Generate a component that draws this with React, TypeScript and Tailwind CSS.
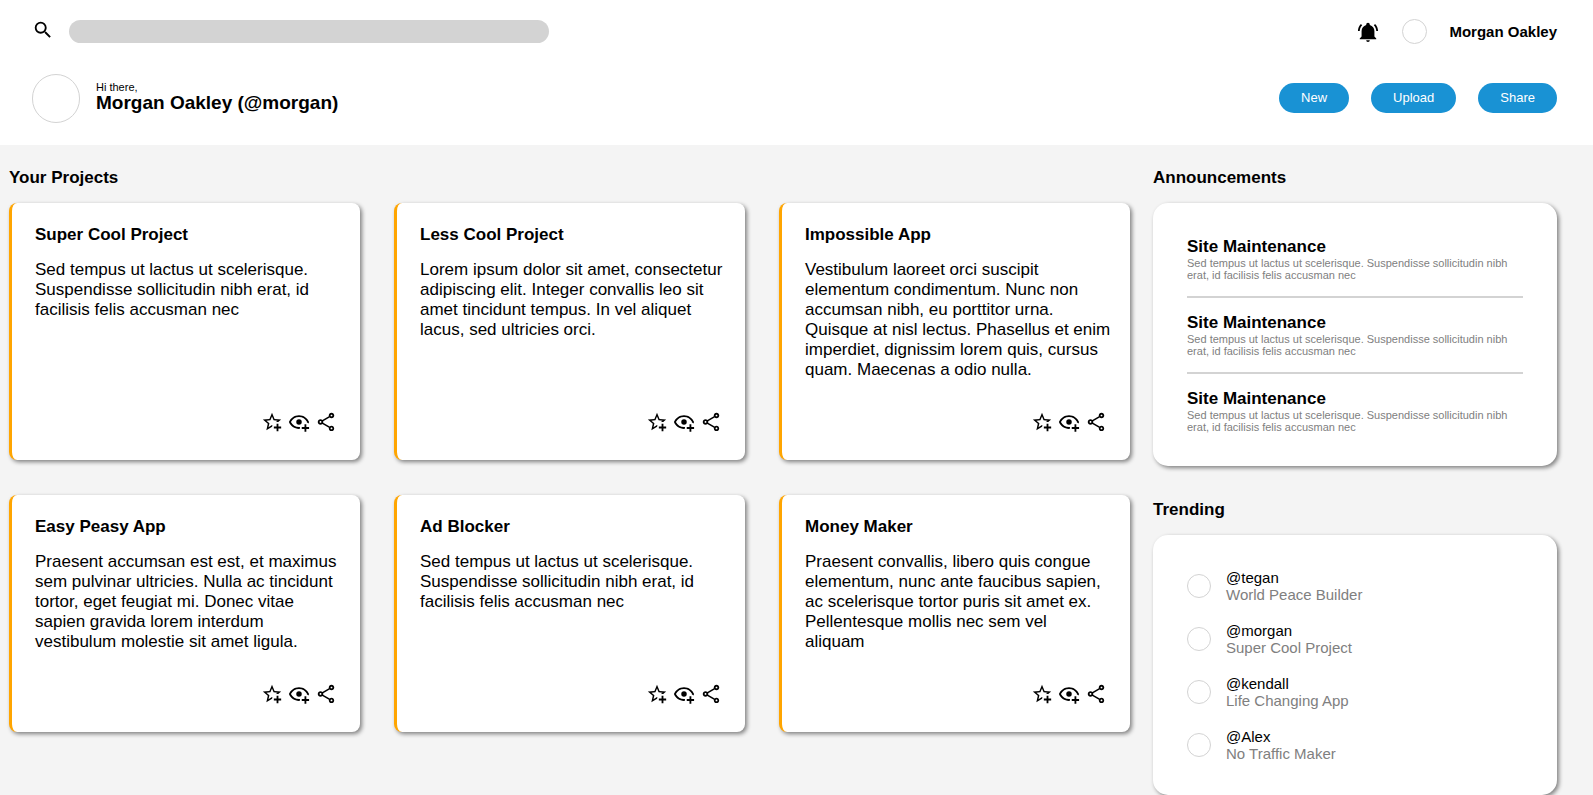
import type { ReactNode } from "react";

const ICONS = {
  magnify:
    "M9.5,3A6.5,6.5 0 0,1 16,9.5C16,11.11 15.41,12.59 14.44,13.73L14.71,14H15.5L20.5,19L19,20.5L14,15.5V14.71L13.73,14.44C12.59,15.41 11.11,16 9.5,16A6.5,6.5 0 0,1 3,9.5A6.5,6.5 0 0,1 9.5,3M9.5,5C7,5 5,7 5,9.5C5,12 7,14 9.5,14C12,14 14,12 14,9.5C14,7 12,5 9.5,5Z",
  bell: "M21,19V20H3V19L5,17V11C5,7.9 7.03,5.17 10,4.29C10,4.19 10,4.1 10,4A2,2 0 0,1 12,2A2,2 0 0,1 14,4C14,4.1 14,4.19 14,4.29C16.97,5.17 19,7.9 19,11V17L21,19M14,21A2,2 0 0,1 12,23A2,2 0 0,1 10,21M19.75,3.19L18.33,4.61C20.04,6.3 21,8.6 21,11H23C23,8.07 21.84,5.25 19.75,3.19M1,11H3C3,8.6 3.96,6.3 5.67,4.61L4.25,3.19C2.16,5.25 1,8.07 1,11Z",
  star: "M5.8 21L7.4 14L2 9.2L9.2 8.6L12 2L14.8 8.6L22 9.2L18.8 12H18C17.3 12 16.6 12.1 15.9 12.4L18.1 10.5L13.7 10.1L12 6.1L10.3 10.1L5.9 10.5L9.2 13.4L8.2 17.7L12 15.4L12.5 15.7C12.3 16.2 12.1 16.8 12.1 17.3L5.8 21M17 14V17H14V19H17V22H19V19H22V17H19V14H17Z",
  eye: "M12,4.5C7,4.5 2.73,7.61 1,12C2.73,16.39 7,19.5 12,19.5C12.36,19.5 12.72,19.5 13.08,19.45C13.03,19.13 13,18.82 13,18.5C13,18.14 13.04,17.78 13.1,17.42C12.74,17.46 12.37,17.5 12,17.5C8.24,17.5 4.83,15.36 3.18,12C4.83,8.64 8.24,6.5 12,6.5C15.76,6.5 19.17,8.64 20.82,12C20.7,12.24 20.56,12.45 20.43,12.68C21.09,12.84 21.72,13.11 22.29,13.5C22.56,13 22.8,12.5 23,12C21.27,7.61 17,4.5 12,4.5M12,9A3,3 0 0,0 9,12A3,3 0 0,0 12,15A3,3 0 0,0 15,12A3,3 0 0,0 12,9M18,14.5V17.5H15V19.5H18V22.5H20V19.5H23V17.5H20V14.5H18Z",
  share:
    "M18 16.08C17.24 16.08 16.56 16.38 16.04 16.85L8.91 12.7C8.96 12.47 9 12.24 9 12S8.96 11.53 8.91 11.3L15.96 7.19C16.5 7.69 17.21 8 18 8C19.66 8 21 6.66 21 5S19.66 2 18 2 15 3.34 15 5C15 5.24 15.04 5.47 15.09 5.7L8.04 9.81C7.5 9.31 6.79 9 6 9C4.34 9 3 10.34 3 12S4.34 15 6 15C6.79 15 7.5 14.69 8.04 14.19L15.16 18.34C15.11 18.55 15.08 18.77 15.08 19C15.08 20.61 16.39 21.91 18 21.91S20.92 20.61 20.92 19C20.92 17.39 19.61 16.08 18 16.08M18 4C18.55 4 19 4.45 19 5S18.55 6 18 6 17 5.55 17 5 17.45 4 18 4M6 13C5.45 13 5 12.55 5 12S5.45 11 6 11 7 11.45 7 12 6.55 13 6 13M18 20C17.45 20 17 19.55 17 19S17.45 18 18 18 19 18.45 19 19 18.55 20 18 20Z",
};

function Icon({ name }: { name: keyof typeof ICONS }) {
  return (
    <svg viewBox="0 0 24 24" className="size-[22px] fill-current" aria-hidden="true">
      <path d={ICONS[name]} />
    </svg>
  );
}

const projects = [
  { title: "Super Cool Project", text: "Sed tempus ut lactus ut scelerisque. Suspendisse sollicitudin nibh erat, id facilisis felis accusman nec" },
  { title: "Less Cool Project", text: "Lorem ipsum dolor sit amet, consectetur adipiscing elit. Integer convallis leo sit amet tincidunt tempus. In vel aliquet lacus, sed ultricies orci." },
  { title: "Impossible App", text: "Vestibulum laoreet orci suscipit elementum condimentum. Nunc non accumsan nibh, eu porttitor urna. Quisque at nisl lectus. Phasellus et enim imperdiet, dignissim lorem quis, cursus quam. Maecenas a odio nulla." },
  { title: "Easy Peasy App", text: "Praesent accumsan est est, et maximus sem pulvinar ultricies. Nulla ac tincidunt tortor, eget feugiat mi. Donec vitae sapien gravida lorem interdum vestibulum molestie sit amet ligula." },
  { title: "Ad Blocker", text: "Sed tempus ut lactus ut scelerisque. Suspendisse sollicitudin nibh erat, id facilisis felis accusman nec" },
  { title: "Money Maker", text: "Praesent convallis, libero quis congue elementum, nunc ante faucibus sapien, ac scelerisque tortor puris sit amet ex. Pellentesque mollis nec sem vel aliquam" },
];

const announcements = [1, 2, 3].map((id) => ({
  id,
  title: "Site Maintenance",
  text: "Sed tempus ut lactus ut scelerisque. Suspendisse sollicitudin nibh erat, id facilisis felis accusman nec",
}));

const trending = [
  { user: "@tegan", project: "World Peace Builder" },
  { user: "@morgan", project: "Super Cool Project" },
  { user: "@kendall", project: "Life Changing App" },
  { user: "@Alex", project: "No Traffic Maker" },
];

function ProjectCard({ title, text }: { title: string; text: string }) {
  return (
    <article className="flex flex-col rounded-lg border-l-3 border-[#ffa500] bg-white pt-[22px] pr-[19px] pb-[27px] pl-[23px] shadow-[2px_2px_4px_gray]">
      <h3 className="text-[17px] leading-5 font-bold">{title}</h3>
      <p className="mt-[15px] text-[17px] leading-5">{text}</p>
      <div className="mt-auto flex justify-end gap-[5px] pt-[31px] pr-1">
        <button type="button" aria-label="Star"><Icon name="star" /></button>
        <button type="button" aria-label="Watch"><Icon name="eye" /></button>
        <button type="button" aria-label="Share project"><Icon name="share" /></button>
      </div>
    </article>
  );
}

function Panel({ title, children }: { title: string; children: ReactNode }) {
  return (
    <section>
      <h2 className="text-[17px] leading-5 font-bold">{title}</h2>
      <div className="mt-[15px] rounded-[15px] bg-white px-[34px] pt-[34px] pb-[33px] shadow-[2px_2px_4px_gray]">{children}</div>
    </section>
  );
}

export default function App() {
  return (
    <div className="flex min-h-screen flex-col bg-[#f4f4f4] font-['Liberation_Sans',Arial,sans-serif] text-black">
      <header className="bg-white pt-[19px] pr-9 pb-[22px] pl-8">
        <div className="flex items-center justify-between">
          <label className="flex items-center gap-[15px]">
            <span className="pb-[3px]"><Icon name="magnify" /></span>
            <input type="search" aria-label="Search" className="h-[23px] w-[480px] rounded-xl bg-[#d3d3d3] px-3 text-sm outline-none" />
          </label>
          <div className="flex items-center">
            <button type="button" aria-label="Notifications"><Icon name="bell" /></button>
            <span className="ml-[23px] size-[25px] rounded-full border border-[#d3d3d3]" />
            <span className="ml-[22px] text-[15px] leading-5 font-bold">Morgan Oakley</span>
          </div>
        </div>
        <div className="mt-[30px] flex items-center justify-between">
          <div className="flex items-center gap-4">
            <span className="h-[49px] w-12 rounded-full border border-[#d3d3d3]" />
            <div className="pb-[3px]">
              <p className="text-[11px] leading-3">Hi there,</p>
              <h1 className="text-[19px] leading-5 font-bold">Morgan Oakley (@morgan)</h1>
            </div>
          </div>
          <div className="flex gap-[22px] pb-0.5">
            {["New", "Upload", "Share"].map((label) => (
              <button key={label} type="button" className="h-[30px] rounded-full bg-[#1992d4] px-[22px] text-[13px] text-white">
                {label}
              </button>
            ))}
          </div>
        </div>
      </header>
      <main className="grid grid-cols-[minmax(0,1fr)_404px] items-start gap-[23px] pt-[23px] pr-9 pl-[9px]">
        <section>
          <h2 className="text-[17px] leading-5 font-bold">Your Projects</h2>
          <div className="mt-[15px] grid grid-cols-3 gap-x-[34px] gap-y-[35px]">
            {projects.map((p) => (
              <ProjectCard key={p.title} {...p} />
            ))}
          </div>
        </section>
        <aside className="flex flex-col gap-[34px]">
          <Panel title="Announcements">
            <ul>
              {announcements.map((a) => (
                <li key={a.id} className="border-b-2 border-[#d3d3d3] pb-[15px] not-first:pt-[15px] last:border-b-0 last:pb-0">
                  <h3 className="text-[17px] leading-5 font-bold">{a.title}</h3>
                  <p className="text-[11px] leading-3 text-[#808080]">{a.text}</p>
                </li>
              ))}
            </ul>
          </Panel>
          <Panel title="Trending">
            <ul className="flex flex-col gap-[19px]">
              {trending.map((t) => (
                <li key={t.user} className="flex items-center gap-[15px] text-[15px] leading-[17px]">
                  <span className="size-6 rounded-full border border-[#d3d3d3]" />
                  <div>
                    <p>{t.user}</p>
                    <p className="text-[#808080]">{t.project}</p>
                  </div>
                </li>
              ))}
            </ul>
          </Panel>
        </aside>
      </main>
    </div>
  );
}
